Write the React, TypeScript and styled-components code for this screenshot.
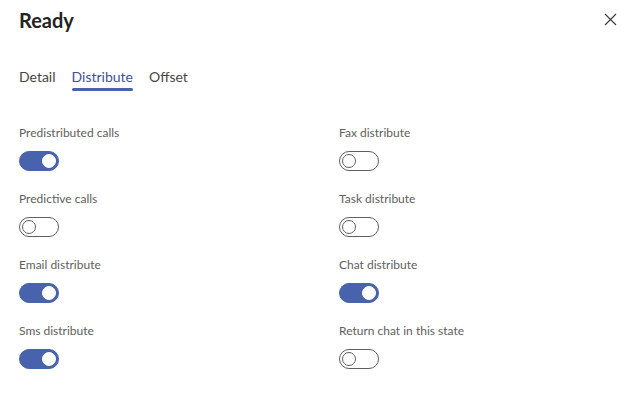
import React, { useState } from "react";
import styled, { createGlobalStyle } from "styled-components";

const GlobalStyle = createGlobalStyle`
  html, body { margin: 0; padding: 0; background: #ffffff; }
  body { font-family: "Segoe UI", Lato, "Open Sans", sans-serif; color: #252423; }
  * { box-sizing: border-box; }
`;

const Panel = styled.div`
  width: 632px;
  height: 409px;
  background: #fff;
  padding: 0 0 0 19px;
`;

const Header = styled.div`
  display: flex;
  align-items: center;
  justify-content: space-between;
  height: 38px;
  padding-right: 14px;
`;

const Title = styled.h1`
  margin: 0;
  font-size: 20px;
  font-weight: 700;
  line-height: 28px;
  color: #252423;
  padding-top: 1px;
`;

const CloseButton = styled.button`
  border: none;
  background: none;
  padding: 0;
  width: 16px;
  height: 16px;
  display: flex;
  align-items: center;
  justify-content: center;
  cursor: pointer;
`;

const TabList = styled.div`
  display: flex;
  gap: 16px;
  margin-top: 29px;
  height: 25px;
`;

const Tab = styled.button<{ $active?: boolean }>`
  position: relative;
  border: none;
  background: none;
  padding: 0;
  font-family: inherit;
  font-size: 14px;
  line-height: 20px;
  height: 20px;
  color: ${(p) => (p.$active ? "#3f509a" : "#484644")};
  cursor: pointer;
  &::after {
    content: "";
    display: ${(p) => (p.$active ? "block" : "none")};
    position: absolute;
    left: 0;
    right: 0;
    bottom: -4px;
    height: 3px;
    border-radius: 2px;
    background: #4862ad;
  }
`;

const Grid = styled.div`
  display: grid;
  grid-template-columns: 320px 1fr;
  margin-top: 33px;
  row-gap: 20px;
`;

const Field = styled.div`
  display: flex;
  flex-direction: column;
  gap: 10px;
`;

const Label = styled.label`
  font-size: 12px;
  line-height: 16px;
  color: #605e5c;
`;

const Track = styled.button<{ $on: boolean }>`
  position: relative;
  width: 40px;
  height: 20px;
  border-radius: 10px;
  padding: 0;
  cursor: pointer;
  border: 1px solid ${(p) => (p.$on ? "#4862ad" : "#605e5c")};
  background: ${(p) => (p.$on ? "#4862ad" : "#ffffff")};
`;

const Thumb = styled.span<{ $on: boolean }>`
  position: absolute;
  top: 2px;
  left: ${(p) => (p.$on ? "22px" : "2px")};
  width: 14px;
  height: 14px;
  border-radius: 50%;
  background: #fff;
  border: 1px solid ${(p) => (p.$on ? "#ffffff" : "#605e5c")};
`;

const Toggle = ({ on, onClick }: { on: boolean; onClick: () => void }) => (
  <Track $on={on} onClick={onClick} role="switch" aria-checked={on}>
    <Thumb $on={on} />
  </Track>
);

const initial = [
  { label: "Predistributed calls", on: true },
  { label: "Fax distribute", on: false },
  { label: "Predictive calls", on: false },
  { label: "Task distribute", on: false },
  { label: "Email distribute", on: true },
  { label: "Chat distribute", on: true },
  { label: "Sms distribute", on: true },
  { label: "Return chat in this state", on: false },
];

export default function App() {
  const [items, setItems] = useState(initial);
  const [tab, setTab] = useState("Distribute");
  return (
    <>
      <GlobalStyle />
      <Panel>
        <Header>
          <Title>Ready</Title>
          <CloseButton aria-label="Close">
            <svg width="13" height="13" viewBox="0 0 13 13">
              <path d="M1 1 L12 12 M12 1 L1 12" stroke="#3b3a39" strokeWidth="1.1" fill="none" />
            </svg>
          </CloseButton>
        </Header>
        <TabList>
          {["Detail", "Distribute", "Offset"].map((t) => (
            <Tab key={t} $active={tab === t} onClick={() => setTab(t)}>
              {t}
            </Tab>
          ))}
        </TabList>
        <Grid>
          {items.map((it, i) => (
            <Field key={it.label}>
              <Label>{it.label}</Label>
              <Toggle
                on={it.on}
                onClick={() =>
                  setItems(items.map((x, j) => (j === i ? { ...x, on: !x.on } : x)))
                }
              />
            </Field>
          ))}
        </Grid>
      </Panel>
    </>
  );
}
